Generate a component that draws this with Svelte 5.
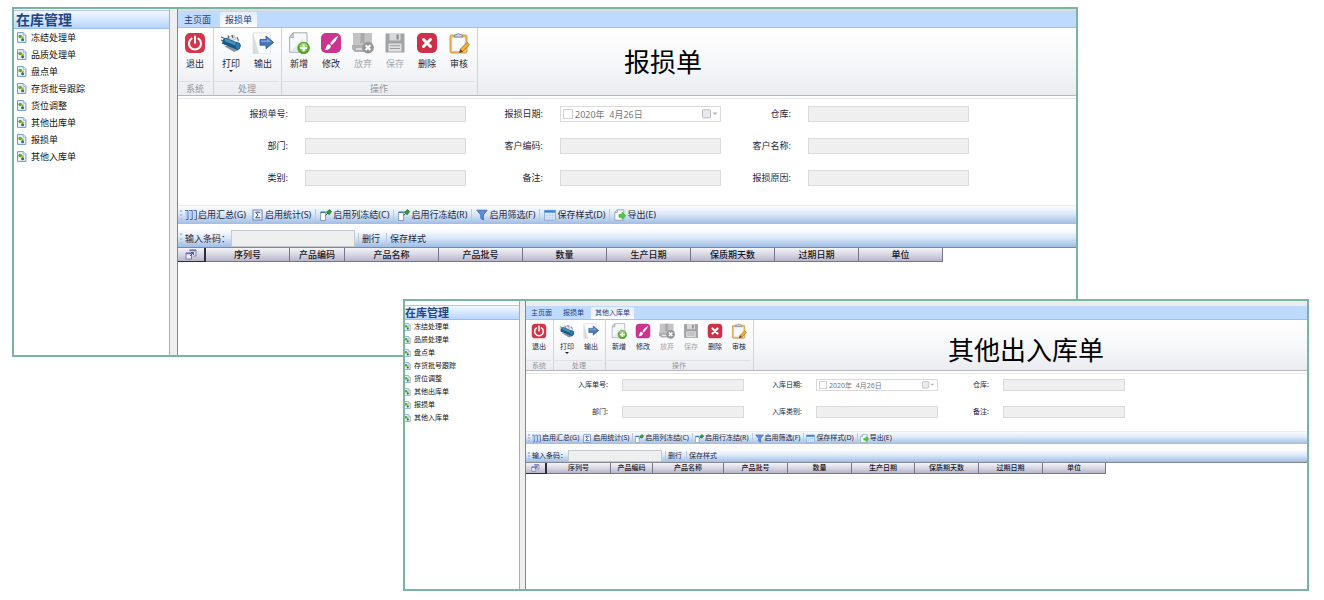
<script lang="ts">
  type Field = { label: string; kind?: 'date' };

  const menu = ['冻结处理单', '品质处理单', '盘点单', '存货批号跟踪', '货位调整', '其他出库单', '报损单', '其他入库单'];

  const ribbon = [
    { name: '系统', actions: [{ icon: 'exit', label: '退出' }] },
    {
      name: '处理',
      actions: [
        { icon: 'print', label: '打印', menu: true },
        { icon: 'output', label: '输出' }
      ]
    },
    {
      name: '操作',
      actions: [
        { icon: 'add', label: '新增' },
        { icon: 'edit', label: '修改' },
        { icon: 'discard', label: '放弃', disabled: true },
        { icon: 'save', label: '保存', disabled: true },
        { icon: 'delete', label: '删除' },
        { icon: 'audit', label: '审核' }
      ]
    }
  ];

  const tools = [
    { icon: 'columns', label: '启用汇总(G)' },
    { icon: 'sigma', label: '启用统计(S)', split: true },
    { icon: 'pin', label: '启用列冻结(C)', split: true },
    { icon: 'pin', label: '启用行冻结(R)', split: true },
    { icon: 'filter', label: '启用筛选(F)', split: true },
    { icon: 'calendar', label: '保存样式(D)', split: true },
    { icon: 'export', label: '导出(E)' }
  ];

  const columns = ['序列号', '产品编码', '产品名称', '产品批号', '数量', '生产日期', '保质期天数', '过期日期', '单位'];

  const windows: {
    id: string;
    title: string;
    tabs: string[];
    fields: Field[];
    handleWidth: number;
    widths: number[];
  }[] = [
    {
      id: 'loss',
      title: '报损单',
      tabs: ['主页面', '报损单'],
      fields: [
        { label: '报损单号' },
        { label: '报损日期', kind: 'date' },
        { label: '仓库' },
        { label: '部门' },
        { label: '客户编码' },
        { label: '客户名称' },
        { label: '类别' },
        { label: '备注' },
        { label: '报损原因' }
      ],
      handleWidth: 28,
      widths: [84, 55, 94, 84, 84, 84, 84, 84, 84]
    },
    {
      id: 'stock',
      title: '其他出入库单',
      tabs: ['主页面', '报损单', '其他入库单'],
      fields: [
        { label: '入库单号' },
        { label: '入库日期', kind: 'date' },
        { label: '仓库' },
        { label: '部门' },
        { label: '入库类别' },
        { label: '备注' }
      ],
      handleWidth: 21,
      widths: [64, 42, 71, 64, 64, 63, 64, 64, 63]
    }
  ];
</script>

{#snippet ribbonIcon(name: string)}
  <svg class="ribbon-icon" viewBox="0 0 22 22" aria-hidden="true">
    {#if name === 'exit'}
      <rect x="1" y="1" width="20" height="20" rx="5" fill="#d3364a" />
      <path d="M7.6 6.6a6 6 0 1 0 6.8 0" fill="none" stroke="#fff" stroke-width="2" stroke-linecap="round" />
      <path d="M11 4.6v6.2" stroke="#fff" stroke-width="2" stroke-linecap="round" />
    {:else if name === 'print'}
      <path d="M6 6l8-3 2 4-9 3z" fill="#e3e6ea" stroke="#9aa2ab" stroke-width=".6" />
      <path d="M1 5l4 1.500M1 8l4 1.500M2 11l4 1.500M8 3.500l1 3M12 3l1 3M17 5l1.500 4" stroke="#56616e" stroke-width="1.100" />
      <path d="M4 14l10 6 5-2-6-4z" fill="#8a939d" />
      <path d="M6 9.500L17 14" stroke="#1b5880" stroke-width="7" stroke-linecap="round" />
      <path d="M6 8.200L16.500 12.400" stroke="#4193c4" stroke-width="3" stroke-linecap="round" />
      <ellipse cx="17.800" cy="14" rx="2.400" ry="3.400" fill="#2f7dad" stroke="#164a70" stroke-width=".6" />
    {:else if name === 'output'}
      <path d="M1 .8h17.5v21H1z" fill="#fbfcfd" stroke="#dadde2" stroke-width=".8" />
      <path d="M1 1v20.8h6z" fill="#d9dce1" />
      <path d="M8 7.4h6V4l7.6 6.4-7.6 6.4v-3.6H8z" fill="#4678b8" stroke="#2d568f" stroke-width=".8" />
      <path d="M9 8.6h6v-2l4 3.5H9z" fill="#7da7d8" />
    {:else if name === 'add'}
      <path d="M5 .8h14v19.4H1.6V5z" fill="#f6f8f9" stroke="#9aa4a9" stroke-width=".9" />
      <path d="M5.4 1v4.4H1.6z" fill="#cfd5d8" stroke="#9aa4a9" stroke-width=".7" />
      <path d="M3 19l12-13v13z" fill="#e4e9ec" />
      <circle cx="15.6" cy="16" r="5.8" fill="#4fae20" stroke="#338613" stroke-width=".7" />
      <circle cx="15.6" cy="15" r="4.2" fill="#8fd95c" />
      <path d="M15.6 12.6v6.8M12.2 16H19" stroke="#fff" stroke-width="2" />
    {:else if name === 'edit'}
      <rect x="1" y="1" width="20" height="20" rx="5" fill="#c9348f" />
      <path d="M18.4 3.6c-3 1.8-6.600 5.200-8.200 7.800l1.600 1.600c2.600-2 5.600-6 6.600-9.400z" fill="#fff" />
      <path d="M9.200 12.200l1.800 1.800c-.4 2.800-3 4.400-6.500 4 1.600-1 1.300-2.200 1.900-3.600.5-1.300 1.600-2.200 2.800-2.200z" fill="#fff" />
    {:else if name === 'discard'}
      <path d="M1 1h19v15H1z" fill="#c3c3c4" />
      <path d="M8.500 1h4v10h-4z" fill="#a9a9ab" />
      <path d="M0 13h14v7H3l-3-3z" fill="#b0b0b2" />
      <path d="M4 17h6" stroke="#eee" stroke-width="1.400" />
      <circle cx="16" cy="15.600" r="5.900" fill="#96979a" />
      <path d="M13.600 13.200l4.800 4.800M18.400 13.200l-4.800 4.800" stroke="#fff" stroke-width="2" />
    {:else if name === 'save'}
      <path d="M1.500 1.500h19v19h-19z" fill="#a2a3a6" />
      <path d="M5.500 1.500h11v7h-11z" fill="#d9d9da" />
      <path d="M12.500 2.500h2.200v5h-2.200z" fill="#8b8c90" />
      <path d="M4.500 11.500h13v8h-13z" fill="#dfdfe1" />
      <path d="M6 13.800h10M6 16.500h10" stroke="#9a9a9d" stroke-width="1.100" />
    {:else if name === 'delete'}
      <rect x="1" y="1" width="20" height="20" rx="5" fill="#cf3049" />
      <path d="M7.500 7.500l7 7M14.500 7.500l-7 7" stroke="#fff" stroke-width="3" stroke-linecap="round" />
    {:else if name === 'audit'}
      <rect x="2" y="3" width="17" height="18" rx="1.500" fill="#f5b95a" stroke="#c98a35" stroke-width=".8" />
      <path d="M4 5.500h13v13.500H4z" fill="#f9fafc" stroke="#d5dbe5" stroke-width=".6" />
      <path d="M6 5l1.500-2.500h1.800a1.400 1.400 0 0 1 2.600 0h1.800L15 5z" fill="#d3d9e3" stroke="#66738a" stroke-width=".8" />
      <path d="M12.500 17l6.500-6.500 2.400 2.300-6.400 6.600-3.600 1.300z" fill="#f6b22f" stroke="#9b6515" stroke-width=".8" />
      <path d="M12.500 17.200l2.400 2.200-3.400 1.300z" fill="#5b4630" />
    {/if}
  </svg>
{/snippet}

{#snippet toolIcon(name: string)}
  <svg class="tool-icon" viewBox="0 0 12 12" aria-hidden="true">
    {#if name === 'columns'}
      <path d="M0 1.500h3v9H1M4.200 1.500h3v9H5M8.400 1.500h3v9H9.300" fill="none" stroke="#4468b4" stroke-width="1" />
      <path d="M0 2.500h2v7H1M4.200 2.500h2v7H5M8.400 2.500h2v7H9" fill="#b9cef0" />
    {:else if name === 'sigma'}
      <rect x="1" y="1" width="9" height="10" fill="#f4f8ff" stroke="#5a78ae" stroke-width=".9" />
      <path d="M7.800 4V3.200H3.600L6 6 3.600 8.800h4.200V8" fill="none" stroke="#2b4c8c" stroke-width="1" />
    {:else if name === 'pin'}
      <path d="M.6 3.500h5v8h-5z" fill="#fff" stroke="#70869f" stroke-width=".8" />
      <path d="M.6 3.200h5" stroke="#3a6cb2" stroke-width="1.400" />
      <path d="M5.500 6.500L8 4" stroke="#3c5a3d" stroke-width="1" />
      <path d="M6.200 3.200L9.600.6l2 2-2.400 3.200z" fill="#2f9b35" stroke="#1c6a26" stroke-width=".6" />
    {:else if name === 'filter'}
      <path d="M.8 1.200h10.400L7.400 6v5L4.800 9.400V6z" fill="#5d8fe0" stroke="#3562b0" stroke-width=".8" />
    {:else if name === 'calendar'}
      <rect x=".6" y="1.300" width="10.800" height="9.700" fill="#e3effc" stroke="#7ea5d4" stroke-width=".8" />
      <path d="M.6 2.500h10.800" stroke="#3b84cf" stroke-width="2.400" />
      <path d="M3.300 4v7M6 4v7M8.700 4v7M1 6.300h10M1 8.600h10" stroke="#a9c8ea" stroke-width=".6" />
    {:else if name === 'export'}
      <path d="M3.200.8h6.600v10.400H.8V3.300z" fill="#f9fbfd" stroke="#8797ab" stroke-width=".8" />
      <path d="M3.400 1v2.500H1" fill="none" stroke="#8797ab" stroke-width=".7" />
      <path d="M5 5.500h3V3.200l3.700 3.600L8 10.400V8.200H5z" fill="#46cf3f" stroke="#2c9a2c" stroke-width=".6" />
    {/if}
  </svg>
{/snippet}

<main class="desktop">
  {#each windows as win (win.id)}
    <section class="window {win.id}" aria-label={win.title}>
      <aside class="sidebar">
        <h2>在库管理</h2>
        <ul>
          {#each menu as item}
            <li>
              <a href="#{win.id}">
                <svg class="doc-icon" viewBox="0 0 11 11" aria-hidden="true">
                  <path d="M1.500.600h5.800l2.600 2.600v7.200H1.500z" fill="#e9f2fd" stroke="#6e9acb" stroke-width="1" />
                  <path d="M7.300.600v2.600h2.600" fill="#fff" stroke="#6e9acb" stroke-width=".7" />
                  <circle cx="4.200" cy="4.500" r="1.800" fill="#4fae2e" />
                  <circle cx="6.600" cy="5.600" r="1.300" fill="#e0a52c" />
                  <circle cx="6.600" cy="7.700" r="1.500" fill="#2f7a3c" />
                </svg>
                {item}
              </a>
            </li>
          {/each}
        </ul>
      </aside>
      <div class="splitter"></div>

      <div class="main">
        <nav class="tabs">
          {#each win.tabs as tab, i}
            <button class="tab" class:active={i === win.tabs.length - 1}>{tab}</button>
          {/each}
        </nav>

        <div class="ribbon">
          {#each ribbon as group}
            <div class="group">
              <div class="actions">
                {#each group.actions as action}
                  <button class="action" disabled={action.disabled}>
                    {@render ribbonIcon(action.icon)}
                    <span>{action.label}</span>
                    {#if action.menu}<i class="caret"></i>{/if}
                  </button>
                {/each}
              </div>
              <div class="group-name">{group.name}</div>
            </div>
          {/each}
          <h1>{win.title}</h1>
        </div>

        <form class="fields">
          {#each win.fields as field, i}
            <label for="{win.id}-{i}">{field.label}:</label>
            {#if field.kind === 'date'}
              <div class="date">
                <input type="checkbox" aria-label="启用{field.label}" disabled />
                <input id="{win.id}-{i}" class="date-text" type="text" value="2020年  4月26日" disabled />
                <button type="button" class="picker" aria-label="选择日期" disabled>
                  <svg viewBox="0 0 16 10" aria-hidden="true">
                    <rect x=".5" y=".8" width="8" height="8" rx="1" fill="#e9e9ee" stroke="#b9b9c2" />
                    <path d="M10.500 3.500h5L13 6z" fill="#b4b4b8" />
                  </svg>
                </button>
              </div>
            {:else}
              <input id="{win.id}-{i}" class="field" type="text" disabled />
            {/if}
          {/each}
        </form>

        <div class="toolbar">
          <i class="grip"></i>
          {#each tools as tool}
            <button class="tool" class:split={tool.split}>
              {@render toolIcon(tool.icon)}
              {tool.label}
            </button>
          {/each}
        </div>

        <div class="toolbar scan">
          <i class="grip"></i>
          <label for="{win.id}-code">输入条码：</label>
          <input id="{win.id}-code" class="code" type="text" />
          <button class="plain">删行</button>
          <button class="plain">保存样式</button>
        </div>

        <div class="grid">
          <table>
            <thead>
              <tr>
                <th class="handle" style:width="{win.handleWidth}px" aria-label="选择列">
                  <svg viewBox="0 0 12 11" aria-hidden="true">
                    <path d="M4.500 1h6.500v6H8.500M1 4h5.500v6H1z" fill="#eeeefb" stroke="#6a6fae" stroke-width=".9" />
                    <path d="M4.500 1.500H11M1 4.500h5.500" stroke="#6a6fae" stroke-width="1.400" />
                    <path d="M5 7l3.500-3.500M6 3.500h2.500V6" fill="none" stroke="#3d4386" stroke-width=".9" />
                  </svg>
                </th>
                {#each columns as column, i}
                  <th style:width="{win.widths[i]}px">{column}</th>
                {/each}
              </tr>
            </thead>
          </table>
        </div>
      </div>
    </section>
  {/each}
</main>

<style>
  :global(body) {
    background: #fff;
  }

  .desktop {
    position: relative;
    min-height: 100vh;
    overflow: hidden;
    font-family: 'Noto Sans', 'Noto Sans CJK SC', sans-serif;
    color: #25253a;
  }

  button,
  input {
    margin: 0;
    padding: 0;
    border: 0;
    border-radius: 0;
    background: none;
    box-sizing: border-box;
    font: inherit;
    color: inherit;
  }

  /* The two windows share one layout, each with its own set of sizes. */
  .window {
    position: absolute;
    display: flex;
    box-sizing: border-box;
    border: 2px solid #7ab5a0;
    background: #fff;
    font-size: var(--text);
    line-height: var(--line);
    white-space: nowrap;
  }

  .loss {
    --text: 9px;
    --line: 12px;
    --side: 156px;
    --side-title: 14px;
    --side-head: 19px;
    --item: 17px;
    --item-gap: 4px;
    --item-pad: 2px;
    --doc: 11px;
    --split: 7px;
    --strip: 2px;
    --tab: 16px;
    --tab-pad: 5px;
    --tab-gap: 4px;
    --action: 32px;
    --action-h: 53px;
    --action-pad: 4px;
    --icon: 22px;
    --group-pad: 1px;
    --group-name: 13px;
    --label-1: 112px;
    --label-2: 64px;
    --label-3: 57px;
    --field: 161px;
    --field-h: 16px;
    --field-gap: 15px;
    --row-gap: 16px;
    --form-pad: 7px;
    --form-end: 19px;
    --bar: 19px;
    --bar-gap: 6px;
    --tool-icon: 12px;
    --tool-pad: 3px;
    --tool-sep: 2px;
    --code: 124px;
    --scan: 17px;
    --th: 14px;
    --body: 107px;
    --box: 10px;
    --title-x: 446px;
    --title-y: 50%;
    top: 7px;
    left: 12px;
    right: 246px;
  }

  .stock {
    --text: 7px;
    --line: 10px;
    --side: 115px;
    --side-title: 11px;
    --side-head: 15px;
    --item: 13px;
    --item-gap: 3px;
    --item-pad: 0px;
    --doc: 8px;
    --split: 5px;
    --strip: 5px;
    --tab: 13px;
    --tab-pad: 4px;
    --tab-gap: 3px;
    --action: 24px;
    --action-h: 40px;
    --action-pad: 3px;
    --icon: 16px;
    --group-pad: 1px;
    --group-name: 9px;
    --label-1: 84px;
    --label-2: 48px;
    --label-3: 41px;
    --field: 122px;
    --field-h: 12px;
    --field-gap: 12px;
    --row-gap: 15px;
    --form-pad: 5px;
    --form-end: 13px;
    --bar: 13px;
    --bar-gap: 6px;
    --tool-icon: 9px;
    --tool-pad: 2px;
    --tool-sep: 1px;
    --code: 94px;
    --scan: 12px;
    --th: 11px;
    --body: 126px;
    --box: 8px;
    --title-x: 422px;
    --title-y: 60%;
    top: 299px;
    left: 403px;
    right: 15px;
  }

  .sidebar {
    flex: none;
    box-sizing: border-box;
    width: var(--side);
    padding-top: calc(var(--strip) - 1px);
    border-right: 1px solid #8fb2e4;
    overflow: hidden;
  }

  .sidebar h2 {
    margin: 0;
    height: var(--side-head);
    padding-left: 2px;
    border-top: 1px solid #b8c6de;
    border-bottom: 1px solid #9dbdea;
    box-sizing: border-box;
    background: linear-gradient(#f2f8ff, #b7d6ff);
    font-size: var(--side-title);
    line-height: calc(var(--side-head) - 2px);
    font-weight: 700;
    color: #244680;
  }

  .stock h2 {
    padding-left: 0;
  }

  .sidebar ul {
    margin: 0;
    padding: 0;
    list-style: none;
  }

  /* The smaller window is scrolled slightly, so its icons are clipped. */
  .stock ul {
    margin-left: -2px;
  }

  .sidebar a {
    display: flex;
    align-items: center;
    gap: var(--item-gap);
    height: var(--item);
    padding-left: var(--item-pad);
    color: #111;
    text-decoration: none;
  }

  .doc-icon {
    width: var(--doc);
    height: var(--doc);
  }

  .splitter {
    flex: none;
    width: var(--split);
    background: #efeff0;
    border-right: 1px solid #85858c;
  }

  .main {
    flex: 1;
    min-width: 0;
    overflow: hidden;
  }

  .tabs {
    display: flex;
    align-items: flex-end;
    gap: var(--tab-gap);
    height: var(--tab);
    padding-left: 1px;
    border-top: var(--strip) solid #dcdce1;
    border-bottom: 1px solid #a9bfdf;
    background: #bfdaff;
  }

  .stock .tabs {
    border-top-color: #ececef;
  }

  .tab {
    height: calc(var(--tab) - 1px);
    padding: 0 var(--tab-pad);
    border-radius: 2px 2px 0 0;
    color: #1d3d80;
  }

  .tab.active {
    background: linear-gradient(#e2eefe, #fbfcff);
  }

  .ribbon {
    position: relative;
    display: flex;
    border-bottom: 1px solid #b5b5be;
    background: linear-gradient(#fff, #f7f8fa 50%, #ebecf0);
  }

  .ribbon h1 {
    position: absolute;
    left: var(--title-x);
    top: var(--title-y);
    margin: 0;
    transform: translateY(-50%);
    font-size: 26px;
    line-height: 36px;
    font-weight: 400;
    color: #000;
  }

  .group {
    padding: 0 2px 0 var(--group-pad);
    border-right: 1px solid #d3d4da;
  }

  .actions {
    display: flex;
    height: var(--action-h);
    border-bottom: 1px solid #dfe0e5;
  }

  .action {
    display: flex;
    flex-direction: column;
    align-items: center;
    width: var(--action);
    padding-top: var(--action-pad);
  }

  .action:disabled {
    color: #a6a7ae;
  }

  .action span {
    margin-top: var(--action-pad);
  }

  .ribbon-icon {
    width: var(--icon);
    height: var(--icon);
    flex: none;
  }

  .caret {
    border: 2px solid transparent;
    border-top-color: #222;
    border-bottom: 0;
  }

  .group-name {
    height: var(--group-name);
    line-height: var(--group-name);
    text-align: center;
    color: #93959e;
  }

  .fields {
    display: grid;
    grid-template-columns: var(--label-1) var(--field) var(--label-2) var(--field) var(--label-3) var(--field);
    column-gap: var(--field-gap);
    row-gap: var(--row-gap);
    align-items: center;
    margin-top: 2px;
    padding: var(--form-pad) 0 var(--form-end);
    border-top: 1px solid #e3e7ec;
  }

  .fields label {
    padding-right: 2px;
    text-align: right;
  }

  .field {
    width: 100%;
    height: var(--field-h);
    border: 1px solid #dadada;
    background: #efefef;
  }

  .date {
    display: flex;
    align-items: center;
    gap: 2px;
    box-sizing: border-box;
    height: var(--field-h);
    padding: 0 2px;
    border: 1px solid #dadada;
    background: #fff;
  }

  .date input[type='checkbox'] {
    appearance: none;
    flex: none;
    width: var(--box);
    height: var(--box);
    border: 1px solid #d2d2d2;
  }

  .date-text {
    flex: 1;
    min-width: 0;
    height: 100%;
    color: #77777c;
    white-space: pre;
  }

  .picker {
    display: flex;
    align-items: center;
  }

  .picker svg {
    height: var(--box);
  }

  .toolbar {
    display: flex;
    align-items: center;
    box-sizing: border-box;
    height: var(--bar);
    border-top: 1px solid #e9edf4;
    background: linear-gradient(#fbfdff, #dbe8f8 45%, #9fbde4);
  }

  .grip {
    flex: none;
    height: 60%;
    margin: 0 var(--tool-pad) 0 2px;
    border-left: 2px dotted #b4c2d8;
  }

  .tool {
    display: flex;
    align-items: center;
    gap: 1px;
    padding: 0 var(--tool-pad);
  }

  .tool:first-of-type {
    padding-left: 0;
  }

  .tool.split {
    margin-right: calc(var(--tool-sep) - 1px);
    padding-right: calc(var(--tool-pad) + 1px);
    border-right: 1px solid #b9c9e2;
  }

  .tool-icon {
    width: var(--tool-icon);
    height: var(--tool-icon);
  }

  .scan {
    height: calc(var(--scan) + 1px);
    margin-top: var(--bar-gap);
    border-top: 0;
    border-bottom: 1px solid #85868f;
  }

  .code {
    width: var(--code);
    height: var(--scan);
    margin: 0 3px 0 1px;
    border: 1px solid #c4c8cf;
    background: #efefef;
  }

  .plain {
    padding: 0 var(--tool-pad);
    border-left: 1px solid #b9c9e2;
  }

  .plain + .plain {
    margin-left: var(--tool-pad);
  }

  .grid {
    min-height: var(--body);
  }

  table {
    width: 1px;
    table-layout: fixed;
    border-collapse: separate;
    border-spacing: 0;
  }

  th {
    box-sizing: border-box;
    height: var(--th);
    padding: 0;
    border-right: 1px solid #77758c;
    border-bottom: 1px solid #77758c;
    background: linear-gradient(#f4f4f8, #d5d4e0 55%, #b7b5cb);
    line-height: calc(var(--th) - 1px);
    font-weight: 500;
    text-align: center;
    color: #15151f;
  }

  .handle {
    border-right: 2px solid #2c2c38;
    border-bottom-color: #2c2c38;
  }

  .handle svg {
    display: block;
    height: calc(var(--th) - 3px);
    margin: 0 auto;
  }
</style>
